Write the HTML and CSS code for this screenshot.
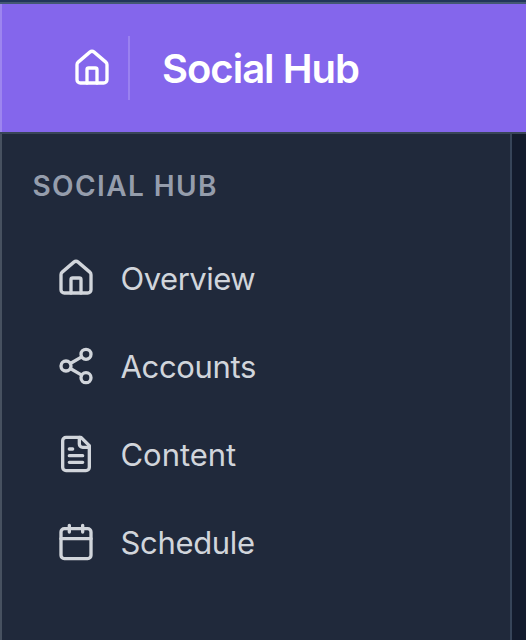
FILE: index.html
```html
<!DOCTYPE html>
<html lang="en">
<head>
<meta charset="utf-8">
<title>Social Hub</title>
<link rel="stylesheet" href="styles.css">
</head>
<body>
<div class="app">
  <header class="topbar">
    <a class="home">
      <svg class="icon" viewBox="0 0 24 24"><path d="M15 21v-8a1 1 0 0 0-1-1h-4a1 1 0 0 0-1 1v8"/><path d="M3 10a2 2 0 0 1 .709-1.528l7-5.999a2 2 0 0 1 2.582 0l7 5.999A2 2 0 0 1 21 10v9a2 2 0 0 1-2 2H5a2 2 0 0 1-2-2z"/></svg>
    </a>
    <h1 class="title">Social Hub</h1>
  </header>
  <div class="body">
    <aside class="sidebar">
      <h2 class="section">SOCIAL HUB</h2>
      <nav class="nav">
        <a class="item"><svg class="icon" viewBox="0 0 24 24"><path d="M15 21v-8a1 1 0 0 0-1-1h-4a1 1 0 0 0-1 1v8"/><path d="M3 10a2 2 0 0 1 .709-1.528l7-5.999a2 2 0 0 1 2.582 0l7 5.999A2 2 0 0 1 21 10v9a2 2 0 0 1-2 2H5a2 2 0 0 1-2-2z"/></svg><span class="overview">Overview</span></a>
        <a class="item"><svg class="icon" viewBox="0 0 24 24"><circle cx="18" cy="5" r="3"/><circle cx="6" cy="12" r="3"/><circle cx="18" cy="19" r="3"/><path d="m8.59 13.51 6.83 3.98M15.41 6.51l-6.82 3.98"/></svg><span class="accounts">Accounts</span></a>
        <a class="item"><svg class="icon" viewBox="0 0 24 24"><path d="M15 2H6a2 2 0 0 0-2 2v16a2 2 0 0 0 2 2h12a2 2 0 0 0 2-2V7Z"/><path d="M14 2v4a2 2 0 0 0 2 2h4M10 9H8M16 13H8M16 17H8"/></svg><span class="content">Content</span></a>
        <a class="item"><svg class="icon" viewBox="0 0 24 24"><path d="M8 2v4M16 2v4"/><rect x="3" y="4" width="18" height="18" rx="2"/><path d="M3 10h18"/></svg><span class="schedule">Schedule</span></a>
      </nav>
    </aside>
    <main class="main"></main>
  </div>
</div>
</body>
</html>
```
FILE: styles.css
```css
* { box-sizing: border-box; }
body {
  margin: 0;
  background: #21355a;
  font-family: Inter, "Liberation Sans", sans-serif;
}
.app {
  display: flex;
  flex-direction: column;
  height: 640px;
  padding-top: 2px;
  overflow: hidden;
}
.topbar {
  display: flex;
  align-items: center;
  flex: none;
  height: 132px;
  border-top: 2px solid #435873;
  border-bottom: 2px solid #394658;
  background: #8466ec;
  box-shadow: inset 2px 0 #9d85ef;
  color: #fff;
}
.home {
  display: flex;
  align-items: center;
  height: 64px;
  width: 130px;
  padding-left: 72px;
  border-right: 2px solid #9a81f0;
}
.icon {
  flex: none;
  width: 40px;
  height: 40px;
  fill: none;
  stroke: currentColor;
  stroke-width: 2;
  stroke-linecap: round;
  stroke-linejoin: round;
}
.title {
  margin: 2px 0 0 32px;
  font-size: 40px;
  line-height: 56px;
  font-weight: 600;
  letter-spacing: -1px;
}
.body { display: flex; flex: 1; }
.sidebar {
  width: 512px;
  padding-top: 32px;
  border-left: 2px solid #475160;
  border-right: 2px solid #364459;
  background: #20293b;
}
.section {
  margin: 0;
  padding-left: 30.5px;
  font-size: 28px;
  line-height: 40px;
  font-weight: 600;
  letter-spacing: 1.4px;
  color: #959dac;
}
.nav { margin-top: 28px; }
.item {
  display: flex;
  align-items: center;
  gap: 24.5px;
  height: 88px;
  padding-left: 54px;
  font-size: 31px;
  line-height: 40px;
  color: #d1d5db;
}
.item span { padding-top: 2px; letter-spacing: -0.33px; }
.item .overview { letter-spacing: -0.48px; }
.item .content { letter-spacing: -0.05px; }
.main { flex: 1; background: #131b2d; }
```
